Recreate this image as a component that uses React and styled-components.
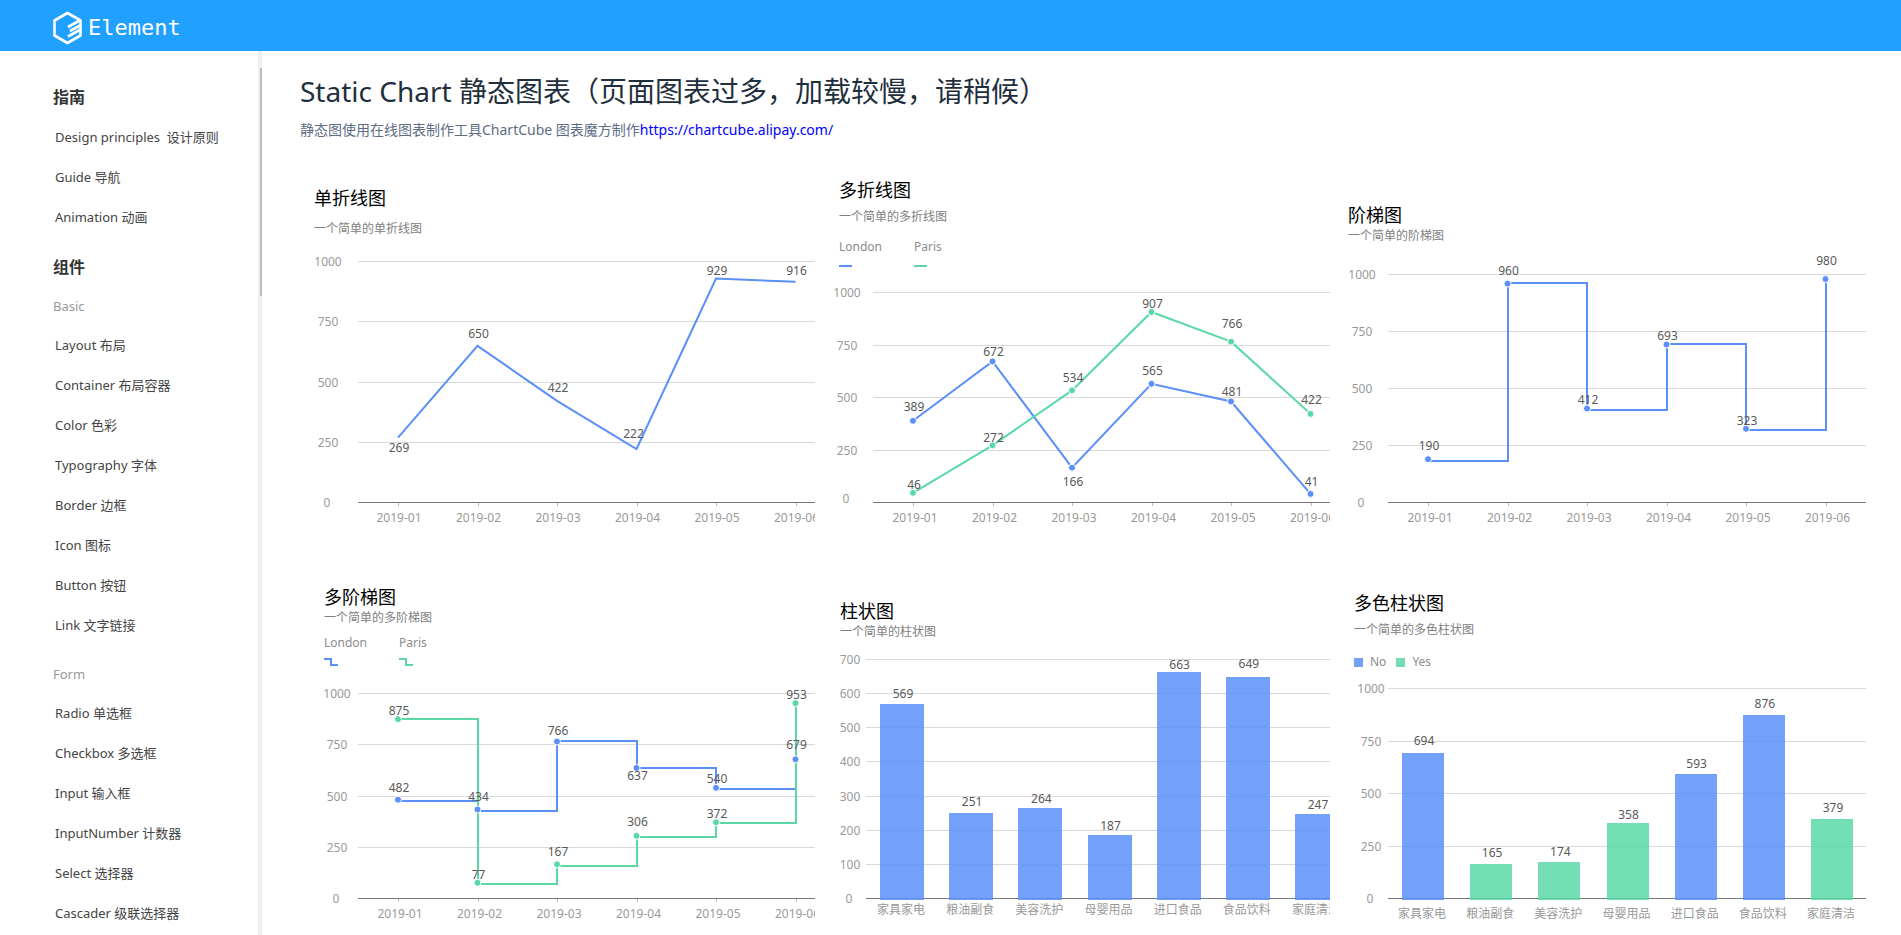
import React from 'react';
import styled, { createGlobalStyle } from 'styled-components';

const BLUE = '#5b8ff9';
const GREEN = '#5ad8a6';

const GlobalStyle = createGlobalStyle`
    * {
        box-sizing: border-box;
    }
    body {
        margin: 0;
        background-color: #fff;
        font-family: "Noto Sans", "Noto Sans CJK SC", sans-serif;
    }
    h1, h2, h3, h4, p, ul, figure {
        margin: 0;
        padding: 0;
        font-weight: 400;
    }
`
const Page = styled.div`
    display: flex;
    flex-direction: column;
    height: 100vh;
    overflow: hidden;
`
const Header = styled.header`
    flex: none;
    display: flex;
    align-items: center;
    height: 51px;
    padding: 4px 53px 0;
    background-color: #20a0ff;
`
const Logo = styled.a`
    display: flex;
    align-items: center;
    gap: 5px;
    color: #fff;
    font-family: "DejaVu Sans Mono", monospace;
    font-size: 22px;
    line-height: 33px;
    text-decoration: none;
`
const Body = styled.div`
    flex: 1;
    display: flex;
    min-height: 0;
`
const Sidebar = styled.aside`
    flex: none;
    display: flex;
    width: 262px;
    overflow: hidden;
`
const Menu = styled.nav`
    flex: 1;
    padding: 26px 0 0 53px;
`
const MenuTitle = styled.h2`
    font-size: 16px;
    font-weight: 700;
    line-height: 40px;
    color: #333;
    ul + & {
        margin-top: 10px;
    }
`
const GroupTitle = styled.h3`
    font-size: 13px;
    line-height: 38px;
    color: #999;
    ul + & {
        margin-top: 10px;
    }
`
const MenuList = styled.ul`
    list-style: none;
`
const MenuLink = styled.a`
    display: block;
    padding-left: 2px;
    font-size: 13px;
    line-height: 40px;
    color: #444;
    text-decoration: none;
    white-space: pre;
`
const ScrollTrack = styled.div`
    width: 4px;
    padding: 17px 0 0 2px;
    background-color: #f0f0f0;
`
const ScrollThumb = styled.div`
    height: 228px;
    background-color: #bbb;
`
const Content = styled.main`
    flex: 1;
    min-width: 0;
    padding: 20px 35px 0 38px;
`
const Heading = styled.h1`
    font-size: 28px;
    line-height: 40px;
    color: #1f2f3d;
`
const Intro = styled.p`
    margin-top: 8px;
    font-size: 14px;
    line-height: 22px;
    color: #5e6d82;
    a {
        color: #00f;
        text-decoration: none;
    }
`
const Charts = styled.div`
    display: grid;
    grid-template-columns: 515fr 515fr 536fr;
    grid-template-rows: 360px 356px;
    row-gap: 40px;
    margin-top: 29px;
`
const Card = styled.figure`
    display: flex;
    flex-direction: column;
    min-width: 0;
    padding-top: ${props => props.$top}px;
    overflow: hidden;
`
const Caption = styled.figcaption`
    display: flex;
    flex-direction: column;
    padding-left: ${props => props.$left}px;
`
const ChartTitle = styled.h4`
    font-size: 18px;
    line-height: 24px;
    color: #000;
`
const Subtitle = styled.p`
    margin-top: ${props => props.$gap}px;
    font-size: 12px;
    line-height: 16px;
    color: #808080;
`
const Legend = styled.div`
    display: flex;
    gap: ${props => props.$square ? 10 : 0}px;
    margin-top: ${props => props.$gap}px;
`
const LegendItem = styled.span`
    display: flex;
    flex-direction: ${props => props.$square ? 'row-reverse' : 'column'};
    align-items: ${props => props.$square ? 'center' : 'flex-start'};
    gap: ${props => props.$square ? 7 : 6}px;
    width: ${props => props.$square ? 'auto' : '75px'};
    font-size: 12px;
    line-height: 16px;
    color: #8c8c8c;
`
const Swatch = styled.i`
    width: 9px;
    height: 9px;
    background-color: ${props => props.$color};
    opacity: 0.85;
`
const Plot = styled.svg`
    display: block;
    width: 100%;
    margin-top: auto;
    font-size: 12px;
    text-anchor: middle;
`
const AxisText = styled.text`
    fill: #999;
`
const ValueText = styled.text`
    fill: #595959;
`

const MENU = [
    {
        title: '指南',
        groups: [
            { items: ['Design principles  设计原则', 'Guide 导航', 'Animation 动画'] },
        ],
    },
    {
        title: '组件',
        groups: [
            {
                name: 'Basic',
                items: ['Layout 布局', 'Container 布局容器', 'Color 色彩', 'Typography 字体', 'Border 边框', 'Icon 图标', 'Button 按钮', 'Link 文字链接'],
            },
            {
                name: 'Form',
                items: ['Radio 单选框', 'Checkbox 多选框', 'Input 输入框', 'InputNumber 计数器', 'Select 选择器', 'Cascader 级联选择器'],
            },
        ],
    },
];

const MONTHS = ['2019-01', '2019-02', '2019-03', '2019-04', '2019-05', '2019-06'];
const GOODS = ['家具家电', '粮油副食', '美容洗护', '母婴用品', '进口食品', '食品饮料', '家庭清洁'];
const QUARTERS = [0, 250, 500, 750, 1000];

// labels: distance from each point up to the middle of its value
// levels: heights at which a stepped line runs, measured above the axis
const CHARTS = [
    {
        title: '单折线图', subtitle: '一个简单的单折线图', top: 16, left: 14, gap: 11,
        width: 515, height: 280, plotLeft: 58, plotHeight: 241, tickX: 28, ticks: QUARTERS,
        firstX: 98, stepX: 159 / 2, categories: MONTHS, categoryShift: 1, ticked: true, type: 'line',
        series: [
            { color: BLUE, values: [269, 650, 422, 222, 929, 916], labels: [-10, 12, 13, 15, 8, 11], shifts: [0, 0, 0, -4, 0, 0] },
        ],
    },
    {
        title: '多折线图', subtitle: '一个简单的多折线图', top: 8, left: 24, gap: 7,
        legend: 'line', legendGap: 14, names: ['London', 'Paris'],
        width: 515, height: 250, plotLeft: 58, plotHeight: 210, tickX: 32, zeroLift: 4, ticks: QUARTERS,
        firstX: 98, stepX: 159 / 2, categories: MONTHS, categoryShift: 2, ticked: true, dots: true, type: 'line',
        series: [
            { color: BLUE, values: [389, 672, 166, 565, 481, 41], labels: [14, 10, -14, 13, 10, 12] },
            { color: GREEN, values: [46, 272, 534, 907, 766, 422], labels: [8, 8, 13, 9, 18, 14] },
        ],
    },
    {
        title: '阶梯图', subtitle: '一个简单的阶梯图', top: 33, left: 18, gap: 1,
        width: 536, height: 280, plotLeft: 58, plotHeight: 228, tickX: 32, ticks: QUARTERS,
        firstX: 98, stepX: 159 / 2, categories: MONTHS, categoryShift: 2, ticked: true, dots: true, type: 'step',
        series: [
            { color: BLUE, values: [190, 960, 412, 693, 323, 980], levels: [41, 219, 92, 158, 72, 222], labels: [14, 13, 9, 9, 8, 19] },
        ],
    },
    {
        title: '多阶梯图', subtitle: '一个简单的多阶梯图', top: 15, left: 24, gap: 1,
        legend: 'step', legendGap: 9, names: ['London', 'Paris'],
        width: 515, height: 246, plotLeft: 58, plotHeight: 205, tickX: 37, ticks: QUARTERS,
        firstX: 98, stepX: 159 / 2, categories: MONTHS, categoryShift: 2, ticked: true, dots: true, type: 'step',
        series: [
            { color: BLUE, values: [482, 434, 766, 637, 540, 679], levels: [97, 87, 157, 130, 109, 139], labels: [12, 13, 11, -8, 9, 15] },
            { color: GREEN, values: [875, 77, 167, 306, 372, 953], levels: [179, 14, 32, 61, 75, 194], labels: [9, 8, 13, 14, 9, 9] },
        ],
    },
    {
        title: '柱状图', subtitle: '一个简单的柱状图', top: 29, left: 25, gap: 1,
        width: 515, height: 276, plotLeft: 51, plotHeight: 239, tickX: 35, ticks: [0, 100, 200, 300, 400, 500, 600, 700],
        firstX: 87, stepX: 415 / 6, categories: GOODS, categoryShift: -1, categoryLift: 4, type: 'bar', barWidth: 44,
        series: [
            { colors: [BLUE, BLUE, BLUE, BLUE, BLUE, BLUE, BLUE], values: [569, 251, 264, 187, 663, 649, 247], labels: [11, 11, 10, 9, 8, 13, 10] },
        ],
    },
    {
        title: '多色柱状图', subtitle: '一个简单的多色柱状图', top: 21, left: 24, gap: 7,
        legend: 'square', legendGap: 16, names: ['No', 'Yes'],
        width: 536, height: 246, plotLeft: 58, plotHeight: 210, tickX: 41, ticks: QUARTERS,
        firstX: 93, stepX: 409 / 6, categories: GOODS, categoryShift: -1, type: 'bar', barWidth: 42,
        series: [
            { colors: [BLUE, GREEN, GREEN, GREEN, BLUE, BLUE, GREEN], values: [694, 165, 174, 358, 593, 876, 379], labels: [12, 11, 10, 9, 10, 11, 11] },
        ],
    },
];

const LogoMark = () => (
    <svg width="30" height="34" viewBox="0 0 30 34" fill="none" stroke="#fff" aria-hidden="true">
        <path d="M14.5 2 L27.5 9.5 V24.5 L14.5 32 L1.5 24.5 V9.5 Z" strokeWidth="2.6" strokeLinejoin="round" />
        <path d="M27.5 9 L15 16 M27.5 14.2 L17 20 M27.5 18.6 L15 25.4" strokeWidth="2.8" />
    </svg>
);

const LegendMark = ({ kind, color }) => {
    if (kind === 'square') return <Swatch $color={color} />;
    return (
        <svg width="15" height="10" viewBox="0 0 15 10" aria-hidden="true">
            {kind === 'line'
                ? <path d="M0 5 H13" stroke={color} strokeWidth="2" />
                : <path d="M0 2 H7 V8 H14" fill="none" stroke={color} strokeWidth="2" />}
        </svg>
    );
};

const linePath = points => points.map(([x, y], i) => `${i ? 'L' : 'M'}${x} ${y}`).join(' ');

const stepPath = (points, levels, base) => points.map(([x], i) => {
    const px = Math.round(x);
    const y = base - levels[i];
    return i ? `H${px} V${y}` : `M${px} ${y}`;
}).join(' ');

const Chart = ({ chart }) => {
    const { width, height, ticks, type } = chart;
    const base = height - 28;
    const scale = chart.plotHeight / ticks[ticks.length - 1];
    const series = chart.series.map(item => ({
        ...item,
        points: item.values.map((value, i) => [chart.firstX + i * chart.stepX, base + 0.5 - value * scale]),
    }));
    return (
        <Card $top={chart.top}>
            <Caption $left={chart.left}>
                <ChartTitle>{chart.title}</ChartTitle>
                <Subtitle $gap={chart.gap}>{chart.subtitle}</Subtitle>
                {chart.legend && (
                    <Legend $gap={chart.legendGap} $square={chart.legend === 'square'}>
                        {chart.names.map((name, i) => (
                            <LegendItem key={name} $square={chart.legend === 'square'}>
                                {name}
                                <LegendMark kind={chart.legend} color={i ? GREEN : BLUE} />
                            </LegendItem>
                        ))}
                    </Legend>
                )}
            </Caption>
            <Plot viewBox={`0 0 ${width} ${height}`} role="img" aria-label={chart.title}>
                {ticks.map(tick => {
                    const y = Math.round(base - tick * scale);
                    return (
                        <g key={tick}>
                            <rect x={chart.plotLeft} y={y} width={width - chart.plotLeft} height="1" fill={tick ? '#d9d9d9' : '#777'} />
                            <AxisText x={chart.tickX - (tick ? 0 : 1)} y={y + 5 - (tick ? 0 : chart.zeroLift || 0)}>{tick}</AxisText>
                        </g>
                    );
                })}
                {chart.categories.map((category, i) => {
                    const x = chart.firstX + i * chart.stepX;
                    return (
                        <g key={category}>
                            {chart.ticked && <rect x={Math.round(x)} y={base + 1} width="1" height="3" fill="#bbb" />}
                            <AxisText x={x + chart.categoryShift} y={base + 20 - (chart.categoryLift || 0)}>{category}</AxisText>
                        </g>
                    );
                })}
                {type === 'bar' && series.map(item => item.points.map(([x, y], i) => (
                    <rect
                        key={i}
                        x={Math.round(x - chart.barWidth / 2)}
                        y={Math.round(y)}
                        width={chart.barWidth}
                        height={base + 2 - Math.round(y)}
                        fill={item.colors[i]}
                        fillOpacity="0.85"
                    />
                )))}
                {type !== 'bar' && series.map(item => (
                    <path
                        key={item.color}
                        d={type === 'step' ? stepPath(item.points, item.levels, base) : linePath(item.points)}
                        fill="none"
                        stroke={item.color}
                        strokeWidth="2"
                    />
                ))}
                {chart.dots && series.map(item => item.points.map(([x, y], i) => (
                    <circle key={i} cx={x} cy={y} r="3.5" fill={item.color} stroke="#fff" strokeWidth="1" />
                )))}
                {series.map(item => item.points.map(([x, y], i) => (
                    <ValueText key={i} x={x + 1 + (item.shifts ? item.shifts[i] : 0)} y={y - item.labels[i] + 4.5}>
                        {item.values[i]}
                    </ValueText>
                )))}
            </Plot>
        </Card>
    );
};

const SideMenu = () => (
    <Sidebar>
        <Menu>
            {MENU.map(section => (
                <React.Fragment key={section.title}>
                    <MenuTitle>{section.title}</MenuTitle>
                    {section.groups.map((group, i) => (
                        <React.Fragment key={i}>
                            {group.name && <GroupTitle>{group.name}</GroupTitle>}
                            <MenuList>
                                {group.items.map(item => (
                                    <li key={item}><MenuLink href="#">{item}</MenuLink></li>
                                ))}
                            </MenuList>
                        </React.Fragment>
                    ))}
                </React.Fragment>
            ))}
        </Menu>
        <ScrollTrack>
            <ScrollThumb />
        </ScrollTrack>
    </Sidebar>
);

const App = () => (
    <Page>
        <GlobalStyle />
        <Header>
            <Logo href="#">
                <LogoMark />
                Element
            </Logo>
        </Header>
        <Body>
            <SideMenu />
            <Content>
                <Heading>Static Chart 静态图表（页面图表过多，加载较慢，请稍候）</Heading>
                <Intro>
                    静态图使用在线图表制作工具ChartCube 图表魔方制作<a href="https://chartcube.alipay.com/">https://chartcube.alipay.com/</a>
                </Intro>
                <Charts>
                    {CHARTS.map(chart => <Chart key={chart.title} chart={chart} />)}
                </Charts>
            </Content>
        </Body>
    </Page>
);

export default App;
